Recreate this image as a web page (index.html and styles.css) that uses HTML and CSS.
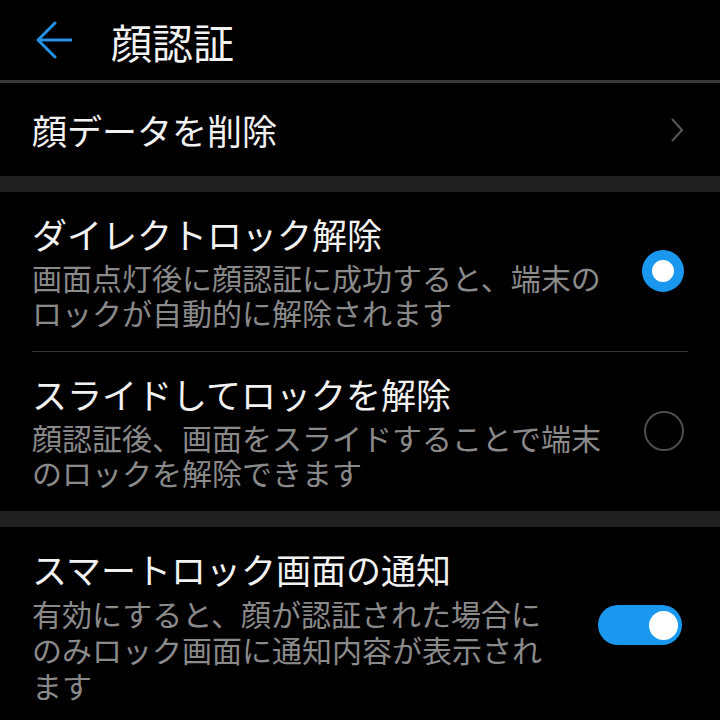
FILE: index.html
```html
<!DOCTYPE html>
<html lang="ja">
<head>
    <meta charset="UTF-8">
    <meta name="viewport" content="width=device-width, initial-scale=1.0">
    <title>顔認証</title>
    <link rel="stylesheet" href="styles.css">
</head>
<body>
    <header class="appbar">
        <svg class="back" width="36" height="38" viewBox="0 0 36 38">
            <path d="M35 19 H3 M19 2 L2 19 L19 36" fill="none" stroke="#2592e6" stroke-width="3" stroke-linecap="round" stroke-linejoin="round"/>
        </svg>
        <h1>顔認証</h1>
    </header>

    <section class="group first">
        <div class="row link">
            <span class="title">顔データを削除</span>
            <svg class="chevron" width="14" height="26" viewBox="0 0 14 26">
                <path d="M2 2 L12 13 L2 24" fill="none" stroke="#555" stroke-width="2.2"/>
            </svg>
        </div>
    </section>

    <div class="gap"></div>

    <section class="group">
        <div class="row">
            <div class="text">
                <p class="title">ダイレクトロック解除</p>
                <p class="sub">画面点灯後に顔認証に成功すると、端末の<br>ロックが自動的に解除されます</p>
            </div>
            <span class="radio checked"></span>
        </div>
        <div class="divider"></div>
        <div class="row">
            <div class="text">
                <p class="title">スライドしてロックを解除</p>
                <p class="sub">顔認証後、画面をスライドすることで端末<br>のロックを解除できます</p>
            </div>
            <span class="radio"></span>
        </div>
    </section>

    <div class="gap"></div>

    <section class="group">
        <div class="row">
            <div class="text">
                <p class="title">スマートロック画面の通知</p>
                <p class="sub long">有効にすると、顔が認証された場合に<br>のみロック画面に通知内容が表示され<br>ます</p>
            </div>
            <span class="switch on"><span class="knob"></span></span>
        </div>
    </section>
</body>
</html>
```

FILE: styles.css
```css
body{
    margin: 0;
    background: #000;
    color: #f2f2f2;
    font-family: "Noto Sans CJK JP", "Noto Sans", sans-serif;
    width: 720px;
    height: 720px;
    overflow: hidden;
}

p{
    margin: 0;
}

.appbar{
    height: 80px;
    display: flex;
    align-items: center;
    padding-left: 36px;
    border-bottom: 3px solid #383838;
}

.appbar h1{
    margin: 0 0 0 39px;
    font-size: 41px;
    font-weight: 400;
    line-height: 1;
    position: relative;
    top: 1px;
}

.back{
    display: block;
}

.row{
    display: flex;
    align-items: center;
    justify-content: space-between;
    padding: 20px 36px 21px 32px;
}

.row.link{
    height: 93px;
    padding-top: 0;
    padding-bottom: 0;
    box-sizing: border-box;
}

.title{
    font-size: 35px;
    line-height: 44px;
    white-space: nowrap;
}

.sub{
    margin-top: 4px;
    font-size: 30px;
    line-height: 35px;
    color: #8a8a8a;
    white-space: nowrap;
}

.sub.long{
    line-height: 36px;
}

.gap{
    height: 16px;
    background: #212121;
}

.divider{
    height: 1px;
    background: #333;
    margin: 0 32px;
}

.radio{
    flex: none;
    width: 36px;
    height: 36px;
    border-radius: 50%;
    border: 2px solid #4d4d4d;
}

.radio.checked{
    width: 22px;
    height: 22px;
    border: 10px solid #1a98ef;
    background: #fff;
}

.switch{
    flex: none;
    width: 84px;
    height: 40px;
    border-radius: 20px;
    background: #1a98ef;
    display: flex;
    align-items: center;
    justify-content: flex-end;
    padding-right: 4px;
    box-sizing: border-box;
    margin-right: 2px;
}

.knob{
    width: 29px;
    height: 29px;
    border-radius: 50%;
    background: #fff;
}
```
